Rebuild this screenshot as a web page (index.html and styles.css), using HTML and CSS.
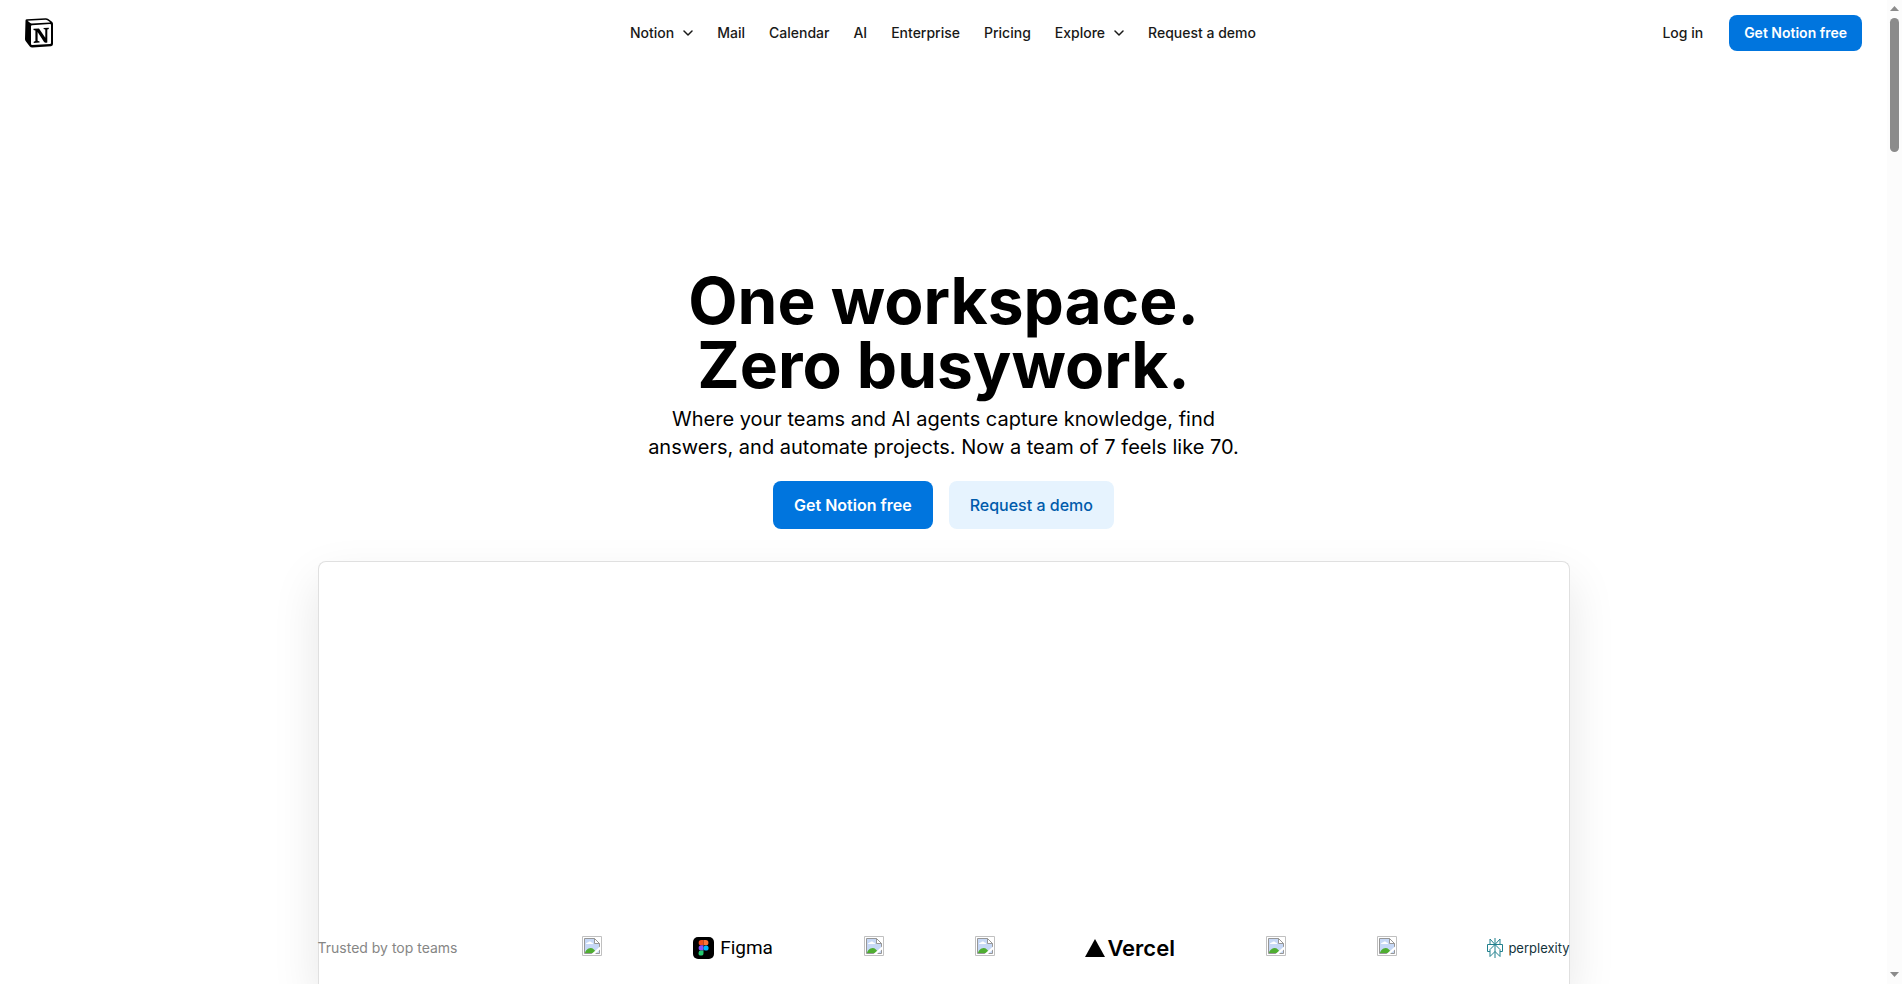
FILE: index.html
```html
<!DOCTYPE html>
<html lang="en">
<head>
<meta charset="utf-8">
<meta name="viewport" content="width=device-width, initial-scale=1">
<title>Notion</title>
<link rel="stylesheet" href="styles.css">
</head>
<body>
<svg class="defs" width="0" height="0" aria-hidden="true">
  <symbol id="chevron" viewBox="0 0 10 6"><path d="M1 1l4 4 4-4" fill="none" stroke="currentColor" stroke-width="1.5" stroke-linecap="round" stroke-linejoin="round"/></symbol>
  <symbol id="missing" viewBox="0 0 20 20">
    <path d="M.5.5h19v19H.5z" fill="#fff" stroke="#c0c0c0"/>
    <path d="M2.500 2.500h10l5 5v10h-15z" fill="#c6d8f6" stroke="#979797"/>
    <path d="M4 8c0-1 1-1.500 2-1.500.5-1.500 3-1.500 3.500 0 1 0 1.500.5 1.500 1.500z" fill="#fff"/>
    <path d="M3 17c0-2 3-5 5.500-5S13 14 14.500 17z" fill="#4fae31"/>
    <path d="M9.500 18L18 10.500v3L13 18z" fill="#fff"/>
    <path d="M12.500 2.500v5h5z" fill="#fff" stroke="#979797"/>
  </symbol>
</svg>
<div class="window">
  <div class="page">
    <header class="header">
      <a class="brand" href="#" aria-label="Notion home">
        <svg width="30" height="30" viewBox="0 0 30 30">
          <path d="M1.500 2.500Q1.500 1.300 3 1.200L21.500.3q1.600-.1 2.800.8L28 3.700q1 .8 1 2V26q0 2-2 2.200L8.500 29.600q-1.800.1-2.700-1.100L1.600 23Q1 22 1 21z" fill="#000"/>
          <path d="M3.500 2.800l18.300-1q.9 0 1.500.4l2.600 1.800q.4.300-.2.400L7.600 5.500q-.7 0-1.300-.4z" fill="#fff"/>
          <path d="M7 8.300q0-1 1-1.100l18-1.100q1 0 1 .9v17.900q0 1-1 1.100l-17.900 1.100q-1.100 0-1.100-1.100z" fill="#fff"/>
          <path d="M9.500 10.800l5.500-.4 6.300 9.400v-8.200l-1.700-.5V10l5.200-.3v1.200l-1.500.7v12.800q-2.200 1.100-3.400-.6l-6.300-9.700v8.700l2 .6v1.200l-5.900.3v-1.200l1.700-.7V12.600l-1.900-.6z" fill="#000"/>
        </svg>
      </a>
      <nav class="nav" aria-label="Main">
        <button class="nav-item" type="button">Notion <svg class="chevron" width="10" height="6"><use href="#chevron"/></svg></button>
        <a class="nav-item" href="#">Mail</a>
        <a class="nav-item" href="#">Calendar</a>
        <a class="nav-item" href="#">AI</a>
        <a class="nav-item" href="#">Enterprise</a>
        <a class="nav-item" href="#">Pricing</a>
        <button class="nav-item" type="button">Explore <svg class="chevron" width="10" height="6"><use href="#chevron"/></svg></button>
        <a class="nav-item" href="#">Request a demo</a>
      </nav>
      <div class="account">
        <a class="nav-item" href="#">Log in</a>
        <a class="button button-small button-primary" href="#">Get Notion free</a>
      </div>
    </header>
    <main class="main">
      <section class="hero">
        <h1 class="title">One workspace.<br>Zero busywork.</h1>
        <p class="lead">Where your teams and AI agents capture knowledge, find answers, and automate projects. Now a team of 7 feels like 70.</p>
        <div class="actions">
          <a class="button button-primary" href="#">Get Notion free</a>
          <a class="button button-secondary" href="#">Request a demo</a>
        </div>
      </section>
      <section class="card" aria-label="Preview">
        <div class="logos">
          <span class="caption">Trusted by top teams</span>
          <svg class="missing" width="20" height="20"><use href="#missing"/></svg>
          <span class="logo figma">
            <svg width="21" height="22" viewBox="0 0 21 22">
              <rect width="21" height="22" rx="5" fill="#000"/>
              <path d="M10.500 3H8.300a2.600 2.600 0 000 5.300h2.200z" fill="#f24e1e"/>
              <path d="M10.500 3h2.300a2.600 2.600 0 010 5.300h-2.300z" fill="#ff7237"/>
              <path d="M10.500 8.300H8.300a2.600 2.600 0 000 5.300h2.200z" fill="#874fff"/>
              <circle cx="13" cy="11" r="2.600" fill="#00b6ff"/>
              <path d="M8.300 13.600h2.200v2.400a2.500 2.500 0 11-2.200-2.400z" fill="#24cb71"/>
            </svg>
            <span>Figma</span>
          </span>
          <svg class="missing" width="20" height="20"><use href="#missing"/></svg>
          <svg class="missing" width="20" height="20"><use href="#missing"/></svg>
          <span class="logo vercel">
            <svg width="20" height="18" viewBox="0 0 20 18"><path d="M10 0l10 18H0z" fill="#000"/></svg>
            <span>Vercel</span>
          </span>
          <svg class="missing" width="20" height="20"><use href="#missing"/></svg>
          <svg class="missing" width="20" height="20"><use href="#missing"/></svg>
          <span class="logo perplexity">
            <svg width="16" height="20" viewBox="0 0 16 20" fill="none" stroke="#20808d" stroke-width="1"><path d="M8 0v20M8 6.500L3 1v5.500h10V1L8 6.500M3 13.500H.500v-7h15v7H13M8 6.500l-5 5v7l5-5 5 5v-7z"/></svg>
            <span>perplexity</span>
          </span>
        </div>
      </section>
    </main>
  </div>
  <div class="scrollbar" aria-hidden="true">
    <svg width="9" height="5" viewBox="0 0 9 5"><path d="M4.500 0L9 5H0z" fill="#8b8b8b"/></svg>
    <div class="track"><div class="thumb"></div></div>
    <svg width="9" height="5" viewBox="0 0 9 5"><path d="M0 0h9L4.500 5z" fill="#8b8b8b"/></svg>
  </div>
</div>
</body>
</html>
```
FILE: styles.css
```css
*, *::before, *::after { box-sizing: border-box; }

body {
  margin: 0;
  background: #fff;
  color: #000;
  font-family: Inter, "Liberation Sans", sans-serif;
}

a { color: inherit; text-decoration: none; }

svg { display: block; flex: none; }

.defs { position: absolute; }

.window {
  display: grid;
  grid-template-columns: minmax(0, 1fr) 15px;
  height: 100vh;
  overflow: hidden;
}

.page {
  display: flex;
  flex-direction: column;
  min-width: 0;
  min-height: 0;
  overflow: hidden;
}

.header {
  display: grid;
  grid-template-columns: 1fr auto 1fr;
  align-items: center;
  height: 66px;
  padding: 0 25px 0 24px;
}

.brand { justify-self: start; }

.nav { display: flex; gap: 24px; }

.nav-item {
  display: flex;
  align-items: center;
  gap: 9px;
  padding: 0;
  border: 0;
  background: none;
  color: #191918;
  font: 500 14px/20px Inter, "Liberation Sans", sans-serif;
  white-space: nowrap;
}

.account {
  display: flex;
  align-items: center;
  justify-self: end;
  gap: 26px;
}

.button {
  padding: 12px 21px;
  border-radius: 8px;
  font-size: 16px;
  font-weight: 500;
  line-height: 24px;
  white-space: nowrap;
}

.button-small {
  padding: 8px 15px;
  font-size: 14px;
  font-weight: 600;
  line-height: 20px;
}

.button-primary { background: #0075de; color: #fff; }
.button-secondary { background: #e6f3fe; color: #005bab; }
.hero .button-primary { font-weight: 600; }

.main {
  display: flex;
  flex: 1;
  flex-direction: column;
  align-items: center;
  min-height: 0;
  padding-top: 203px;
}

.hero {
  display: flex;
  flex-direction: column;
  align-items: center;
  text-align: center;
}

.title {
  margin: 0 0 8px;
  font-size: 64px;
  font-weight: 700;
  line-height: 64px;
}

.lead {
  max-width: 600px;
  margin: 0 0 20px;
  font-size: 20px;
  line-height: 28px;
}

.actions { display: flex; gap: 16px; }

.card {
  display: flex;
  flex: 1;
  flex-direction: column;
  justify-content: flex-end;
  width: 100%;
  max-width: 1252px;
  margin-top: 32px;
  border: 1px solid #e0e0e0;
  border-bottom: 0;
  border-radius: 8px 8px 0 0;
  background: #fff;
  box-shadow: 0 20px 48px rgba(0, 0, 0, 0.1);
}

.logos {
  display: flex;
  align-items: center;
  justify-content: space-between;
  margin: 0 -1px;
  padding-bottom: 24px;
}

.caption {
  padding-right: 34px;
  color: #868685;
  font-size: 14px;
  line-height: 24px;
}

.logo { display: flex; align-items: center; line-height: 24px; }

.missing { margin-bottom: 4px; }

.figma { gap: 6px; font-family: Roboto, sans-serif; font-size: 19px; }
.vercel { gap: 2px; font-size: 22px; font-weight: 600; }
.perplexity { gap: 5px; color: #13343b; font-size: 13px; }

.scrollbar {
  display: flex;
  flex-direction: column;
  align-items: center;
  gap: 7px;
  padding: 6px 0 7px;
  background: #fcfcfc;
}

.track { flex: 1; width: 9px; }

.thumb { height: 14.2%; border-radius: 5px; background: #8b8b8b; }
```
